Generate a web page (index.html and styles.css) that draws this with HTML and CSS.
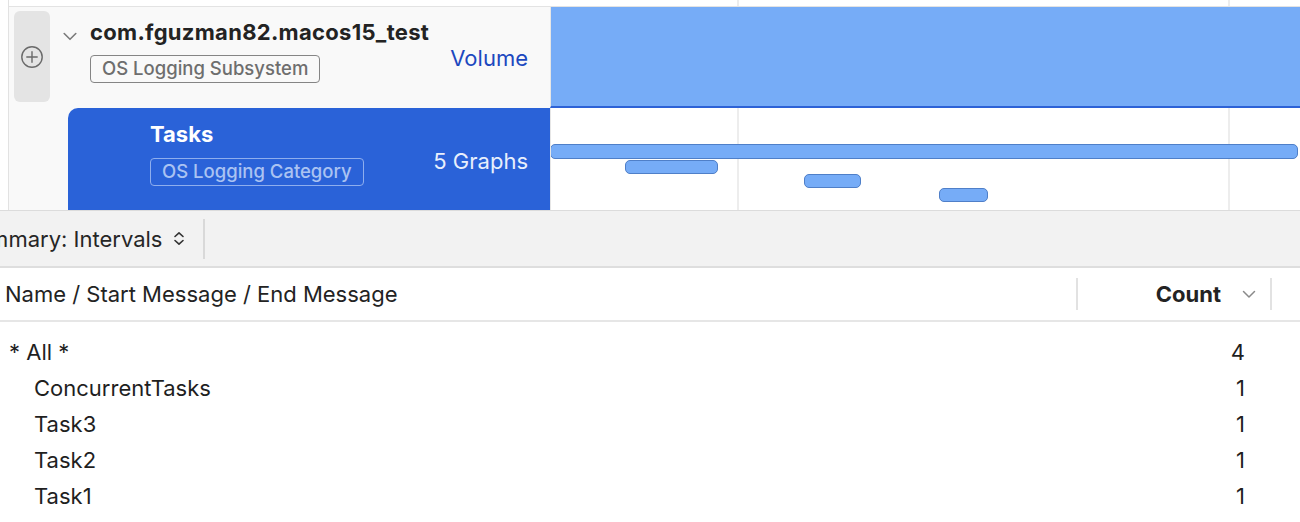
FILE: index.html
```html
<!DOCTYPE html>
<html lang="en">
<head>
<meta charset="utf-8">
<title>Instruments - Intervals</title>
<link rel="stylesheet" href="styles.css">
</head>
<body>
<div class="app">
  <section class="timeline">
    <div class="gutter"></div>
    <div class="tracks">
      <div class="ruler">
        <div class="ruler-left"></div>
        <div class="ruler-graph grid"></div>
      </div>
      <div class="track track-subsystem">
        <div class="track-header">
          <div class="add-btn">
            <svg width="24" height="24" viewBox="0 0 24 24"><circle cx="12" cy="12" r="10.2" fill="none" stroke="#6a6a6a" stroke-width="1.4"/><path d="M12 6.8v10.4M6.8 12h10.4" stroke="#6a6a6a" stroke-width="1.4" stroke-linecap="round"/></svg>
          </div>
          <svg class="disclosure" width="14" height="9" viewBox="0 0 14 9"><path d="M1.2 1.5 7 7.3 12.8 1.5" fill="none" stroke="#7a7a7a" stroke-width="1.6" stroke-linecap="round" stroke-linejoin="round"/></svg>
          <div class="track-title">
            <div class="name">com.fguzman82.macos15_test</div>
            <span class="badge">OS Logging Subsystem</span>
          </div>
          <div class="track-mode">Volume</div>
        </div>
        <div class="track-graph volume"></div>
      </div>
      <div class="track track-category">
        <div class="track-header">
          <div class="selected">
            <div class="track-title">
              <div class="name">Tasks</div>
              <span class="badge">OS Logging Category</span>
            </div>
            <div class="track-mode">5 Graphs</div>
          </div>
        </div>
        <div class="track-graph grid lanes">
          <div class="interval" style="left:-1px;top:36px;width:748px;height:15px"></div>
          <div class="interval" style="left:74px;top:52px;width:93px"></div>
          <div class="interval" style="left:253px;top:66px;width:57px"></div>
          <div class="interval" style="left:388px;top:80px;width:49px"></div>
        </div>
      </div>
    </div>
  </section>

  <div class="toolbar">
    <button class="popup">Summary: Intervals
      <svg width="12" height="15" viewBox="0 0 12 15"><path d="M2 5.5 6 1.8 10 5.5M2 9.5 6 13.2 10 9.5" fill="none" stroke="#333" stroke-width="1.6" stroke-linecap="round" stroke-linejoin="round"/></svg>
    </button>
    <div class="tb-sep"></div>
  </div>

  <div class="table">
    <div class="thead">
      <div class="th th-name">Name / Start Message / End Message</div>
      <div class="th th-count">Count
        <svg width="14" height="9" viewBox="0 0 14 9"><path d="M1.5 1.5 7 7 12.5 1.5" fill="none" stroke="#8a8a8a" stroke-width="1.5" stroke-linecap="round" stroke-linejoin="round"/></svg>
      </div>
      <div class="th th-rest"></div>
    </div>
    <div class="tbody">
      <div class="tr"><div class="td td-name">* All *</div><div class="td td-count">4</div></div>
      <div class="tr child"><div class="td td-name">ConcurrentTasks</div><div class="td td-count">1</div></div>
      <div class="tr child"><div class="td td-name">Task3</div><div class="td td-count">1</div></div>
      <div class="tr child"><div class="td td-name">Task2</div><div class="td td-count">1</div></div>
      <div class="tr child"><div class="td td-name">Task1</div><div class="td td-count">1</div></div>
    </div>
  </div>
</div>
</body>
</html>
```
FILE: styles.css
```css
* { box-sizing: border-box; }
html, body { margin: 0; padding: 0; background: #fff; }
body {
  width: 1300px;
  height: 522px;
  overflow: hidden;
  font-family: Inter, "Noto Sans", "Liberation Sans", sans-serif;
  color: #232323;
}
.app { display: flex; flex-direction: column; width: 1300px; }

/* ---------- timeline ---------- */
.timeline {
  display: flex;
  height: 211px;
  border-bottom: 1px solid #dcdcdc;
}
.gutter {
  width: 9px;
  flex: none;
  background: #fff;
  border-right: 1px solid #e2e2e2;
}
.tracks { flex: 1; display: flex; flex-direction: column; }

.grid {
  background-color: #fff;
  background-image:
    linear-gradient(#ededed, #ededed),
    linear-gradient(#ededed, #ededed);
  background-size: 2px 100%, 2px 100%;
  background-position: 186px 0, 677px 0;
  background-repeat: no-repeat;
}

.ruler { display: flex; height: 7px; border-bottom: 1px solid #e3e3e3; }
.ruler-left { width: 541px; flex: none; background: #fff; }
.ruler-graph { flex: 1; border-left: 1px solid #fff; }

.track { display: flex; }
.track-subsystem { height: 101px; }
.track-category { height: 102px; }

.track-header {
  width: 541px;
  flex: none;
  background: #f9f9f9;
  display: flex;
  align-items: flex-start;
}
.track-graph { flex: 1; position: relative; border-left: 1px solid #e6e6e6; }

.track-subsystem .track-header { padding: 4px 0 0 5px; }
.add-btn {
  width: 36px;
  height: 91px;
  flex: none;
  background: #e4e4e4;
  border-radius: 6px;
  display: flex;
  align-items: center;
  justify-content: center;
}
.disclosure { flex: none; margin: 21px 0 0 13px; }
.track-title {
  display: flex;
  flex-direction: column;
  align-items: flex-start;
  gap: 10px;
}
.track-subsystem .track-title { margin: 8px 0 0 13px; }
.name {
  font-size: 22px;
  font-weight: 700;
  line-height: 26px;
  letter-spacing: 0.3px;
}
.badge {
  display: inline-block;
  height: 28px;
  line-height: 25px;
  padding: 0 11px;
  font-size: 18.5px;
  font-weight: 500;
  color: #6e6e6e;
  border: 1.5px solid #858585;
  border-radius: 4px;
}
.track-mode {
  margin-left: auto;
  margin-right: 22px;
  font-size: 22px;
  line-height: 26px;
  align-self: center;
}
.track-subsystem .track-mode { color: #1c48bf; margin-top: -4px; }

.volume {
  background: #76acf7;
  border-bottom: 2px solid #2d62d6;
}

/* selected category header */
.track-category .track-header { padding-left: 59px; }
.selected {
  flex: 1;
  height: 100%;
  background: #2a62d8;
  border-radius: 10px 0 0 0;
  display: flex;
  align-items: flex-start;
  padding-left: 82px;
}
.selected .track-title { margin-top: 13px; gap: 11px; }
.selected .name { color: #fff; letter-spacing: 0; }
.selected .badge {
  color: #aac3f2;
  border-color: #8eaeee;
}
.selected .track-mode { color: #e8effc; margin-top: 4px; }

.lanes { overflow: hidden; }
.interval {
  position: absolute;
  height: 14px;
  background: #76acf7;
  border: 1px solid #4f7fc8;
  border-radius: 5px;
}

/* ---------- toolbar ---------- */
.toolbar {
  height: 57px;
  background: #f2f2f2;
  border-bottom: 2px solid #dedede;
  display: flex;
  align-items: center;
  overflow: hidden;
}
.popup {
  display: flex;
  align-items: center;
  gap: 11px;
  margin-left: -38px;
  padding: 0;
  border: 0;
  background: none;
  font-family: inherit;
  font-size: 22px;
  line-height: 26px;
  color: #262626;
  white-space: nowrap;
}
.tb-sep {
  width: 2px;
  height: 40px;
  margin-left: 18px;
  background: #d9d9d9;
}

/* ---------- table ---------- */
.thead {
  display: flex;
  height: 54px;
  border-bottom: 2px solid #e6e6e6;
  align-items: center;
}
.th { font-size: 22px; line-height: 26px; }
.th-name {
  width: 1078px;
  padding-left: 5px;
  border-right: 2px solid #e2e2e2;
  height: 32px;
  display: flex;
  align-items: center;
}
.th-count {
  width: 194px;
  height: 32px;
  font-weight: 700;
  display: flex;
  align-items: center;
  justify-content: flex-end;
  gap: 21px;
  padding-right: 14px;
  border-right: 2px solid #e2e2e2;
}
.th-rest { flex: 1; }

.tbody { padding-top: 12px; }
.tr { display: flex; height: 36px; align-items: center; }
.td { font-size: 22px; line-height: 26px; color: #1f1f1f; }
.td-name { width: 1078px; padding-left: 9px; }
.tr.child .td-name { padding-left: 34px; }
.td-count { width: 167px; text-align: right; }
```
